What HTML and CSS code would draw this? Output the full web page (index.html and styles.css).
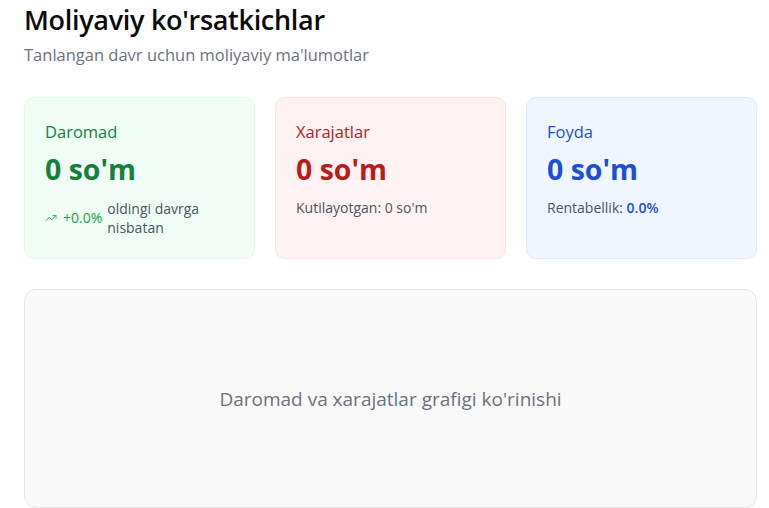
FILE: index.html
```html
<!DOCTYPE html>
<html lang="uz">
<head>
<meta charset="utf-8">
<title>Moliyaviy ko'rsatkichlar</title>
<link rel="stylesheet" href="styles.css">
</head>
<body>
<main class="page">
  <header class="head">
    <h1 class="title">Moliyaviy ko'rsatkichlar</h1>
    <p class="subtitle">Tanlangan davr uchun moliyaviy ma'lumotlar</p>
  </header>

  <section class="cards">
    <div class="card card-green">
      <div class="card-label">Daromad</div>
      <div class="card-value">0 so'm</div>
      <div class="card-meta meta-trend">
        <svg class="trend-icon" viewBox="0 0 24 24" width="12" height="12" fill="none" stroke="currentColor" stroke-width="2" stroke-linecap="round" stroke-linejoin="round"><polyline points="22 7 13.5 15.5 8.5 10.5 2 17"/><polyline points="16 7 22 7 22 13"/></svg>
        <span class="trend-pct">+0.0%</span>
        <span class="trend-note">oldingi davrga nisbatan</span>
      </div>
    </div>
    <div class="card card-red">
      <div class="card-label">Xarajatlar</div>
      <div class="card-value">0 so'm</div>
      <div class="card-meta">Kutilayotgan: 0 so'm</div>
    </div>
    <div class="card card-blue">
      <div class="card-label">Foyda</div>
      <div class="card-value">0 so'm</div>
      <div class="card-meta">Rentabellik: <span class="meta-strong">0.0%</span></div>
    </div>
  </section>

  <section class="chart">
    <span class="chart-text">Daromad va xarajatlar grafigi ko'rinishi</span>
  </section>
</main>
</body>
</html>
```

FILE: styles.css
```css
* { box-sizing: border-box; }
html, body { margin: 0; padding: 0; background: #ffffff; }
body {
  font-family: "Open Sans", "Noto Sans", "Liberation Sans", sans-serif;
  color: #111827;
}
.page {
  padding: 0 12px 0 24px;
}
.head { padding-top: 2px; }
.title {
  margin: 0;
  font-size: 27px;
  line-height: 36px;
  font-weight: 600;
  color: #0a0a0a;
  letter-spacing: -0.3px;
}
.subtitle {
  margin: 5px 0 0;
  font-size: 16.5px;
  line-height: 24px;
  color: #6b7280;
}
.cards {
  margin-top: 30px;
  display: grid;
  grid-template-columns: repeat(3, 1fr);
  gap: 20px;
}
.card {
  border: 1px solid;
  border-radius: 10px;
  padding: 20px 20px 18px;
  min-height: 162px;
}
.card-green { background: #f0fdf4; border-color: #dcfce7; }
.card-red { background: #fef2f2; border-color: #fee2e2; }
.card-blue { background: #eff6ff; border-color: #dbeafe; }
.card-label {
  font-size: 16.5px;
  line-height: 28px;
}
.card-green .card-label { color: #15803d; }
.card-red .card-label { color: #b91c1c; }
.card-blue .card-label { color: #1d4ed8; }
.card-value {
  margin-top: 5px;
  font-size: 28.5px;
  line-height: 36px;
  font-weight: 700;
}
.card-green .card-value { color: #15803d; }
.card-red .card-value { color: #b91c1c; }
.card-blue .card-value { color: #1d4ed8; }
.card-meta {
  margin-top: 11px;
  font-size: 14px;
  line-height: 20px;
  color: #4b5563;
}
.meta-trend {
  margin-top: 12px;
  display: flex;
  align-items: center;
  gap: 5px;
}
.trend-icon { color: #22c55e; flex: none; margin-right: 1px; }
.trend-pct { color: #16a34a; flex: none; }
.trend-note { max-width: 115px; line-height: 19px; }
.meta-strong { color: #1d4ed8; font-weight: 600; }
.chart {
  margin-top: 30px;
  height: 219px;
  background: #f9f9f9;
  border: 1px solid #e5e5e5;
  border-radius: 12px;
  display: flex;
  align-items: center;
  justify-content: center;
}
.chart-text {
  font-size: 19px;
  color: #6b7280;
}
```
